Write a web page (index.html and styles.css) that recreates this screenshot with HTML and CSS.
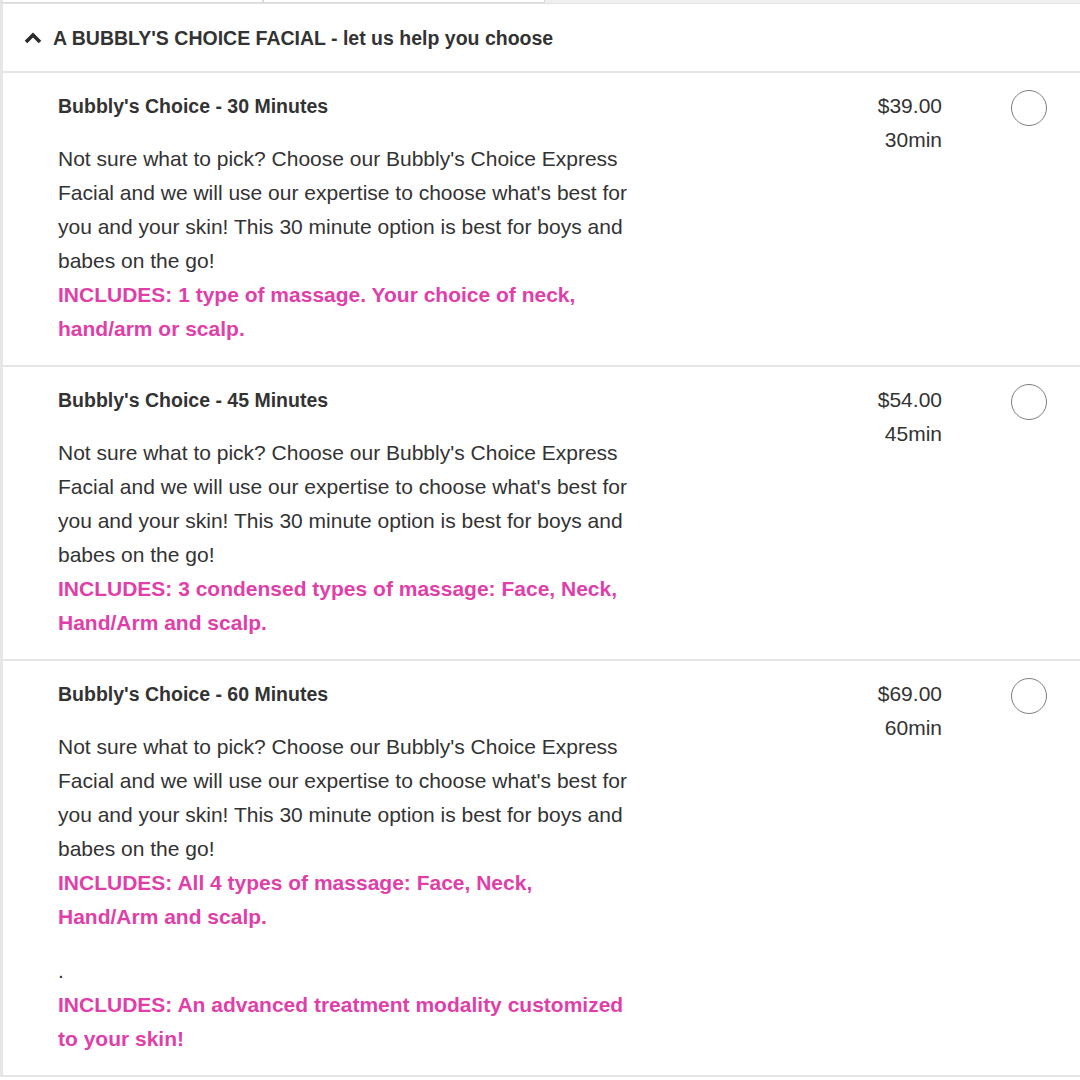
FILE: index.html
```html
<!DOCTYPE html>
<html>
<head>
<meta charset="utf-8">
<link rel="stylesheet" href="styles.css">
</head>
<body>
<div class="page">
  <div class="topstrip">
    <div class="tab tab-a"></div>
    <div class="tab tab-b"></div>
    <div class="tab-rest"></div>
  </div>
  <div class="panel">
    <div class="group-head">
      <svg class="chev" width="18" height="12" viewBox="0 0 18 12"><polyline points="2,10 9,3 16,10" fill="none" stroke="#2b2b2b" stroke-width="3.6" stroke-linejoin="miter"/></svg>
      <span class="group-title">A BUBBLY'S CHOICE FACIAL - let us help you choose</span>
    </div>

    <div class="item">
      <div class="info">
        <div class="name">Bubbly's Choice - 30 Minutes</div>
        <p class="desc">Not sure what to pick? Choose our Bubbly's Choice Express Facial and we will use our expertise to choose what's best for you and your skin! This 30 minute option is best for boys and babes on the go!<br><span class="inc">INCLUDES: 1 type of massage. Your choice of neck, hand/arm or scalp.</span></p>
      </div>
      <div class="price"><div>$39.00</div><div>30min</div></div>
      <div class="radio"></div>
    </div>

    <div class="item">
      <div class="info">
        <div class="name">Bubbly's Choice - 45 Minutes</div>
        <p class="desc">Not sure what to pick? Choose our Bubbly's Choice Express Facial and we will use our expertise to choose what's best for you and your skin! This 30 minute option is best for boys and babes on the go!<br><span class="inc">INCLUDES: 3 condensed types of massage: Face, Neck, Hand/Arm and scalp.</span></p>
      </div>
      <div class="price"><div>$54.00</div><div>45min</div></div>
      <div class="radio"></div>
    </div>

    <div class="item">
      <div class="info">
        <div class="name">Bubbly's Choice - 60 Minutes</div>
        <p class="desc">Not sure what to pick? Choose our Bubbly's Choice Express Facial and we will use our expertise to choose what's best for you and your skin! This 30 minute option is best for boys and babes on the go!<br><span class="inc">INCLUDES: All 4 types of massage: Face, Neck, Hand/Arm and scalp.</span></p>
        <p class="desc extra">.<br><span class="inc">INCLUDES: An advanced treatment modality customized to your skin!</span></p>
      </div>
      <div class="price"><div>$69.00</div><div>60min</div></div>
      <div class="radio"></div>
    </div>
  </div>
</div>
</body>
</html>
```

FILE: styles.css
```css
* { box-sizing: border-box; }
html, body {
  margin: 0;
  padding: 0;
  background: #ffffff;
}
body {
  font-family: "Liberation Sans", Arial, sans-serif;
  color: #333333;
  width: 1080px;
  height: 1080px;
  overflow: hidden;
}
.page {
  width: 1080px;
}
.topstrip {
  display: flex;
  height: 4px;
  border-bottom: 1px solid #e3e3e3;
  background: #efefef;
}
.tab {
  height: 3px;
  background: #ffffff;
  border: 1px solid #d9d9d9;
  border-top: none;
}
.tab-a { width: 263px; border-left: 3px solid #e6e6e6; }
.tab-b { width: 282px; }
.tab-rest { flex: 1; background: #efefef; }

.panel {
  border-left: 3px solid #e6e6e6;
}
.group-head {
  display: flex;
  align-items: center;
  height: 69px;
  padding-left: 21px;
  padding-top: 1px;
  border-bottom: 2px solid #e5e5e5;
}
.chev {
  display: block;
  margin-right: 11px;
  margin-top: -1px;
}
.group-title {
  font-weight: bold;
  font-size: 19.5px;
  color: #333333;
}
.item {
  display: flex;
  align-items: flex-start;
  padding: 16px 33px 19px 55px;
  border-bottom: 2px solid #e5e5e5;
}
.info {
  width: 580px;
}
.name {
  font-weight: bold;
  font-size: 19.5px;
  line-height: 34px;
  margin-bottom: 19px;
}
.desc {
  margin: 0;
  font-size: 21px;
  line-height: 34px;
}
.desc.extra {
  margin-top: 20px;
}
.inc {
  color: #e03fa9;
  font-weight: bold;
}
.price {
  flex: 1;
  text-align: right;
  font-size: 21px;
  line-height: 34px;
  margin-right: 69px;
}
.radio {
  width: 36px;
  height: 36px;
  border-radius: 50%;
  border: 1.5px solid #7d7d7d;
  margin-top: 1px;
  flex-shrink: 0;
}
```
